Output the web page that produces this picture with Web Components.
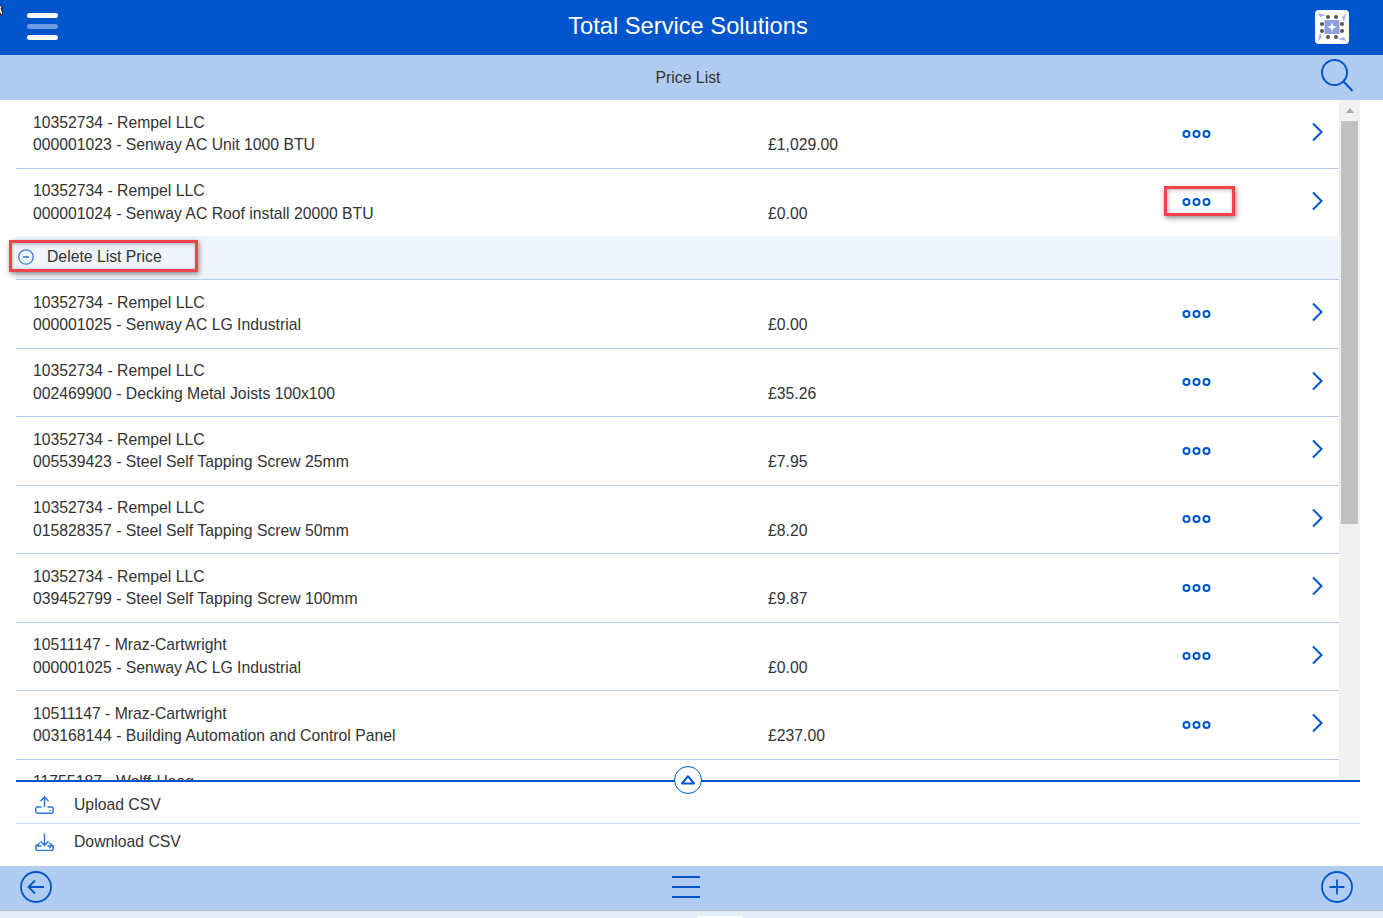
<!DOCTYPE html>
<html>
<head>
<meta charset="utf-8">
<title>Price List</title>
<style>
  html, body { margin: 0; height: 918px; overflow: hidden; background: #fff; }
  body { font-family: "Liberation Sans", Arial, sans-serif; color: #333; position: relative; }
</style>
</head>
<body>
<app-shell>
  <top-bar slot="top" title="Total Service Solutions"></top-bar>
  <sub-bar slot="top" title="Price List"></sub-bar>

  <price-list slot="list">
    <price-row price="£1,029.00" h="68.5"><div>10352734 - Rempel LLC</div><div>000001023 - Senway AC Unit 1000 BTU</div></price-row>
    <price-row price="£0.00" h="67.5" open><div>10352734 - Rempel LLC</div><div>000001024 - Senway AC Roof install 20000 BTU</div></price-row>
    <row-action>Delete List Price</row-action>
    <price-row price="£0.00" h="68.5"><div>10352734 - Rempel LLC</div><div>000001025 - Senway AC LG Industrial</div></price-row>
    <price-row price="£35.26" h="68.5"><div>10352734 - Rempel LLC</div><div>002469900 - Decking Metal Joists 100x100</div></price-row>
    <price-row price="£7.95" h="68.5"><div>10352734 - Rempel LLC</div><div>005539423 - Steel Self Tapping Screw 25mm</div></price-row>
    <price-row price="£8.20" h="68.5"><div>10352734 - Rempel LLC</div><div>015828357 - Steel Self Tapping Screw 50mm</div></price-row>
    <price-row price="£9.87" h="68.5"><div>10352734 - Rempel LLC</div><div>039452799 - Steel Self Tapping Screw 100mm</div></price-row>
    <price-row price="£0.00" h="68.5"><div>10511147 - Mraz-Cartwright</div><div>000001025 - Senway AC LG Industrial</div></price-row>
    <price-row price="£237.00" h="68.5"><div>10511147 - Mraz-Cartwright</div><div>003168144 - Building Automation and Control Panel</div></price-row>
    <price-row price="" h="68.5"><div>11755187 - Wolff-Haag</div><div></div></price-row>
  </price-list>

  <csv-panel slot="panel">
    <csv-row kind="up">Upload CSV</csv-row>
    <csv-row kind="down" last>Download CSV</csv-row>
  </csv-panel>

  <bottom-bar slot="bottom"></bottom-bar>
</app-shell>

<note-box style="left:1164px;top:186px;width:71px;height:30px"></note-box>
<note-box style="left:9px;top:240px;width:189px;height:32px"></note-box>

<script>
const BLUE = '#0055cc';
const FONT = '15.75px';

class AppShell extends HTMLElement {
  connectedCallback() {
    this.attachShadow({ mode: 'open' }).innerHTML = `<style>
      :host { display: flex; flex-direction: column; height: 918px; }
      ::slotted(*) { flex: none; }
      .list { height: 680px; flex: none; }
      .foot { flex: none; height: 8px; box-sizing: border-box; background: #e4ecf8; border-top: 1px solid #b9bec6; position: relative; }
      .foot i { position: absolute; left: 697px; top: 5px; width: 46px; height: 2px; background: #fbfcfe; border-radius: 3px 3px 0 0; }
      svg { position: absolute; left: 0; top: 0; }
    </style>
    <slot name="top"></slot>
    <div class="list"><slot name="list"></slot></div>
    <slot name="panel"></slot>
    <slot name="bottom"></slot>
    <div class="foot"><i></i></div>
    <svg width="8" height="20" viewBox="0 0 8 20"><path d="M-2 3 L3 8 L1 8 L3 14 L1 15 L-2 9Z" fill="#fff" stroke="#111"/></svg>`;
  }
}

class TopBar extends HTMLElement {
  connectedCallback() {
    this.attachShadow({ mode: 'open' }).innerHTML = `<style>
      :host { display: flex; align-items: center; height: 55px; background: ${BLUE}; padding: 0 34px 2px 27px; box-sizing: border-box; }
      .menu { width: 31px; height: 27px; flex: none; display: flex; flex-direction: column; justify-content: space-between; }
      .menu i { display: block; height: 5px; border-radius: 3px; background: #fff; }
      .menu i:nth-child(2) { background: #6a9be0; }
      h1 { flex: 1; margin: 0 0 2px; text-align: center; color: #fff; font: 400 23.7px/50px "Liberation Sans", Arial, sans-serif; padding-left: 3px; }
      .logo { width: 34px; height: 34px; background: #fff; border-radius: 4px; flex: none; }
      svg { display: block; }
    </style>
    <div class="menu"><i></i><i></i><i></i></div>
    <h1>${this.getAttribute('title')}</h1>
    <div class="logo">
      <svg width="34" height="34" viewBox="0 0 34 34">
        <rect x="9.5" y="10" width="15" height="14" fill="#8e9fdc"/>
        <path d="M17 12 L18.2 15.8 L22 17 L18.2 18.2 L17 22 L15.8 18.2 L12 17 L15.8 15.8Z" fill="#fff"/>
        <g fill="#555">
          <circle cx="13" cy="7" r="2"/><circle cx="21" cy="7" r="2"/>
          <circle cx="13" cy="27" r="2"/><circle cx="21" cy="27" r="2"/>
          <circle cx="7" cy="14" r="2"/><circle cx="7" cy="21" r="2"/>
          <circle cx="27" cy="14" r="2"/><circle cx="27" cy="21" r="2"/>
        </g>
        <g fill="#a3b0e6">
          <path d="M3 3 L11 5 L5 7Z"/><path d="M31 4 L29 12 L27 7Z"/>
          <path d="M31 31 L23 29 L29 27Z"/><path d="M3 31 L5 23 L7 27Z"/>
        </g>
      </svg>
    </div>`;
  }
}

class SubBar extends HTMLElement {
  connectedCallback() {
    this.attachShadow({ mode: 'open' }).innerHTML = `<style>
      :host { display: block; height: 45px; background: #b0ccf0; position: relative; text-align: center; font-size: ${FONT}; line-height: 45px; color: #333; padding-right: 7px; }
      svg { position: absolute; left: 1320px; top: 4px; }
    </style>
    ${this.getAttribute('title')}
    <svg width="34" height="34" viewBox="0 0 34 34" fill="none" stroke="${BLUE}" stroke-width="2">
      <circle cx="14.5" cy="13.5" r="12.5"/><path d="M23.5 22.5 L32.5 32"/>
    </svg>`;
  }
}

class PriceList extends HTMLElement {
  connectedCallback() {
    this.attachShadow({ mode: 'open' }).innerHTML = `<style>
      :host { display: flex; height: 680px; margin: 0 23px 0 16px; overflow: hidden; }
      .rows { flex: 1; min-width: 0; }
      .bar { width: 21px; flex: none; background: #f1f1f1; display: flex; flex-direction: column; align-items: center; }
      .arrow { height: 21px; flex: none; display: flex; align-items: center; justify-content: center; }
      .arrow i { border: 4.5px solid transparent; border-top: 0; border-bottom: 5px solid #a8a8a8; width: 0; height: 0; }
      .thumb { width: 17px; height: 403px; background: #c1c1c1; }
    </style>
    <div class="rows"><slot></slot></div>
    <div class="bar"><div class="arrow"><i></i></div><div class="thumb"></div></div>`;
  }
}

class PriceRow extends HTMLElement {
  connectedCallback() {
    const h = this.getAttribute('h');
    const open = this.hasAttribute('open');
    this.attachShadow({ mode: 'open' }).innerHTML = `<style>
      :host { display: grid; grid-template-columns: 735px 414px 130px 10px; height: ${h}px; box-sizing: border-box; padding: 11.5px 0 0 17px;
        border-bottom: ${open ? 0 : '1px solid #b5cdf0'}; font-size: ${FONT}; line-height: 22.6px; color: #333; }
      .price { align-self: start; margin-top: 22.6px; }
      svg { display: block; }
      .dots { margin-top: 17px; }
      .chev { margin-top: 10.5px; }
    </style>
    <div><slot></slot></div>
    <div class="price">${this.getAttribute('price')}</div>
    <div class="dots">
      <svg width="30" height="10" viewBox="0 0 30 10" fill="none" stroke="${BLUE}" stroke-width="2"><circle cx="4.5" cy="5" r="3"/><circle cx="14.5" cy="5" r="3"/><circle cx="24.5" cy="5" r="3"/></svg>
    </div>
    <div class="chev">
      <svg width="11" height="20" viewBox="0 0 11 20" fill="none" stroke="${BLUE}" stroke-width="2"><path d="M1 1.5 L9.5 10 L1 18.5"/></svg>
    </div>`;
  }
}

class RowAction extends HTMLElement {
  connectedCallback() {
    this.attachShadow({ mode: 'open' }).innerHTML = `<style>
      :host { display: flex; align-items: center; height: 44px; box-sizing: border-box; padding: 0 0 2px 2px; background: #f0f4fc; border-bottom: 1px solid #b5cdf0; font-size: ${FONT}; color: #333; }
      svg { margin-right: 13px; flex: none; }
    </style>
    <svg width="16" height="16" viewBox="0 0 16 16" fill="none" stroke="#3a78d8" stroke-width="1.3"><circle cx="8" cy="8" r="7.2"/><path d="M5 8 H11" stroke-width="1.6"/></svg>
    <slot></slot>`;
  }
}

class CsvPanel extends HTMLElement {
  connectedCallback() {
    this.attachShadow({ mode: 'open' }).innerHTML = `<style>
      :host { display: block; height: 86px; margin: 0 23px 0 16px; border-top: 2px solid ${BLUE}; box-sizing: border-box; position: relative; background: #fff; }
      .toggle { position: absolute; left: 658px; top: -16px; width: 28px; height: 28px; box-sizing: border-box; border: 1.6px solid ${BLUE}; border-radius: 50%; background: #fff; display: flex; align-items: center; justify-content: center; }
      svg { display: block; }
    </style>
    <div class="toggle"><svg width="14" height="10" viewBox="0 0 14 10" fill="none" stroke="${BLUE}" stroke-width="2" stroke-linejoin="round"><path d="M7 1.2 L13 8.5 H1Z"/></svg></div>
    <slot></slot>`;
  }
}

class CsvRow extends HTMLElement {
  connectedCallback() {
    const up = this.getAttribute('kind') === 'up';
    const last = this.hasAttribute('last');
    const art = up
      ? 'M9.5 11 V1 M5.5 5 L9.5 1 L13.5 5 M6.5 11 H2.5 Q.8 11 .8 12.7 V15.5 Q.8 17.2 2.5 17.2 H16.5 Q18.2 17.2 18.2 15.5 V12.7 Q18.2 11 16.5 11 H12.5'
      : 'M9.5 0.5 V12 M5.5 8.2 L9.5 12.4 L13.5 8.2 M5 10 L.8 13 V15.6 Q.8 17.4 2.5 17.4 H16.5 Q18.2 17.4 18.2 15.6 V13 L14 10 M.8 13 H6.5 M12.5 13 H18.2';
    this.attachShadow({ mode: 'open' }).innerHTML = `<style>
      :host { display: flex; align-items: center; height: 42px; box-sizing: border-box; padding: ${last ? '0 0 6px 19px' : '4px 0 0 19px'}; font-size: ${FONT}; color: #333;
        border-bottom: ${last ? 0 : '1px solid #cfdcee'}; }
      svg { margin-right: 20px; flex: none; }
    </style>
    <svg width="19" height="18" viewBox="0 0 19 18" fill="none" stroke="#2f76dc" stroke-width="1.5">
      <path d="${art}"/>
      <circle cx="15" cy="14.6" r="0.9" fill="#2f76dc" stroke="none"/>
    </svg>
    <slot></slot>`;
  }
}

class BottomBar extends HTMLElement {
  connectedCallback() {
    const c = `fill="none" stroke="${BLUE}"`;
    this.attachShadow({ mode: 'open' }).innerHTML = `<style>
      :host { display: flex; align-items: center; justify-content: space-between; height: 44px; padding: 0 30px 2px 20px; box-sizing: border-box; background: #b0ccf0; }
      .menu { width: 28px; height: 22px; display: flex; flex-direction: column; justify-content: space-between; margin-left: -2px; }
      .menu i { display: block; height: 2px; background: ${BLUE}; }
      svg { display: block; }
    </style>
    <svg width="32" height="32" viewBox="0 0 32 32" ${c} stroke-width="1.8"><circle cx="16" cy="16" r="15"/><path d="M24 16 H9 M15 9.5 L8.5 16 L15 22.5"/></svg>
    <div class="menu"><i></i><i></i><i></i></div>
    <svg width="32" height="32" viewBox="0 0 32 32" ${c} stroke-width="1.8"><circle cx="16" cy="16" r="15"/><path d="M16 8.5 V23.5 M8.5 16 H23.5"/></svg>`;
  }
}

class NoteBox extends HTMLElement {
  connectedCallback() {
    this.attachShadow({ mode: 'open' }).innerHTML = `<style>
      :host { display: block; position: absolute; box-sizing: border-box; border: 3px solid #f4424a; box-shadow: 1px 2px 5px rgba(0,0,0,.45), inset 1px 1px 4px rgba(0,0,0,.3); pointer-events: none; }
    </style>`;
  }
}

customElements.define('app-shell', AppShell);
customElements.define('top-bar', TopBar);
customElements.define('sub-bar', SubBar);
customElements.define('price-list', PriceList);
customElements.define('price-row', PriceRow);
customElements.define('row-action', RowAction);
customElements.define('csv-panel', CsvPanel);
customElements.define('csv-row', CsvRow);
customElements.define('bottom-bar', BottomBar);
customElements.define('note-box', NoteBox);
</script>
</body>
</html>
